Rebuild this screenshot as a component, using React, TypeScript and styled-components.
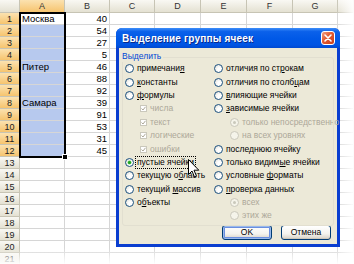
import React from 'react';
import styled, { createGlobalStyle, css } from 'styled-components';

const GlobalStyle = createGlobalStyle`
  html, body {
    margin: 0;
    padding: 0;
    background: #fff;
  }
  body {
    font-family: 'Liberation Sans', Arial, sans-serif;
  }
`;

const Screen = styled.div`
  position: relative;
  width: 354px;
  height: 264px;
  overflow: hidden;
  background: #fff;
`;

/* ---------- spreadsheet ---------- */

const Sheet = styled.div`
  display: grid;
  grid-template-columns: 20px 45px 45px 45px 46px 46px 46px 45px 1fr;
  grid-template-rows: 13px;
  grid-auto-rows: 12px;
  font-size: 9.5px;
  color: #000;
`;

const headerBg = css<{ $active?: boolean }>`
  background: ${({ $active }) =>
    $active
      ? 'linear-gradient(#fbe2b0, #f6c46e)'
      : 'linear-gradient(#f9f8f3, #e4e1d2)'};
  color: #333;
  border-right: 1px solid #c7c4b4;
  border-bottom: 1px solid #c7c4b4;
`;

const Corner = styled.div`
  ${headerBg}
`;

const ColHeader = styled.div<{ $active?: boolean }>`
  ${headerBg}
  display: flex;
  align-items: center;
  justify-content: center;
  font-size: 9px;
`;

const RowHeader = styled.div<{ $active?: boolean }>`
  ${headerBg}
  display: flex;
  align-items: center;
  justify-content: center;
  font-size: 9px;
  color: #222;
`;

const Cell = styled.div<{ $selected?: boolean; $align?: 'left' | 'right' }>`
  display: flex;
  align-items: center;
  justify-content: ${({ $align }) => ($align === 'right' ? 'flex-end' : 'flex-start')};
  padding: 0 2px;
  border-right: 1px solid #d6d6d6;
  border-bottom: 1px solid #d6d6d6;
  background: ${({ $selected }) => ($selected ? '#b7c9ee' : '#fff')};
  white-space: nowrap;
  overflow: hidden;
`;

const SelectionFrame = styled.div`
  position: absolute;
  left: 19px;
  top: 12px;
  width: 43px;
  height: 142px;
  border: 2px solid #000;
`;

const FillHandle = styled.div`
  position: absolute;
  left: 62px;
  top: 154px;
  width: 4px;
  height: 4px;
  background: #000;
  border: 1px solid #fff;
`;

const FadeRight = styled.div`
  position: absolute;
  top: 0;
  right: 0;
  width: 18px;
  height: 100%;
  background: linear-gradient(to right, rgba(255, 255, 255, 0), rgba(255, 255, 255, 0.95));
  pointer-events: none;
`;

const FadeBottom = styled.div`
  position: absolute;
  left: 0;
  bottom: 0;
  width: 100%;
  height: 16px;
  background: linear-gradient(rgba(255, 255, 255, 0), rgba(255, 255, 255, 0.95));
  pointer-events: none;
`;

/* ---------- dialog ---------- */

const Window = styled.div`
  position: absolute;
  left: 116px;
  top: 28px;
  width: 224px;
  height: 219px;
  display: flex;
  flex-direction: column;
  border-radius: 6px 6px 0 0;
  background: #0a3ed0;
  box-sizing: border-box;
  padding: 0 3px 3px;
  font-family: 'Liberation Sans', Arial, sans-serif;
  font-size: 8.5px;
`;

const TitleBar = styled.div`
  height: 20px;
  margin: 0 -3px;
  padding: 0 5px 0 6px;
  display: flex;
  align-items: center;
  justify-content: space-between;
  border-radius: 6px 6px 0 0;
  background: linear-gradient(#3d8ef9 0%, #0b61ea 18%, #0058e6 55%, #0054e3 85%, #0049d0 100%);
`;

const Title = styled.span`
  color: #fff;
  font-weight: bold;
  font-size: 10px;
  letter-spacing: 0.2px;
  text-shadow: 1px 1px 0 #0a2a8a;
`;

const CloseBox = styled.div`
  width: 14px;
  height: 14px;
  box-sizing: border-box;
  border: 1px solid #fff;
  border-radius: 3px;
  background: linear-gradient(135deg, #f0a184 0%, #e2582f 45%, #c8401c 100%);
  display: flex;
  align-items: center;
  justify-content: center;
`;

const Body = styled.div`
  flex: 1;
  background: #ece9d8;
  display: flex;
  flex-direction: column;
  padding: 3px 0 0 3px;
`;

const GroupBox = styled.div`
  position: relative;
  margin-right: 3px;
  padding-top: 11px;
`;

const GroupLine = styled.div`
  position: absolute;
  left: 0;
  right: 0;
  top: 6px;
  bottom: -3px;
  border: 1px solid #e2dfd0;
  border-radius: 3px;
  pointer-events: none;
`;

const Legend = styled.span`
  position: absolute;
  left: 0;
  top: 0;
  padding-right: 2px;
  color: #0046d5;
  background: #ece9d8;
  line-height: 11px;
`;

const Columns = styled.div`
  display: grid;
  grid-template-columns: 89px 1fr;
`;

const Column = styled.div`
  display: flex;
  flex-direction: column;
`;

const Option = styled.div<{ $indent?: number; $disabled?: boolean }>`
  height: 13.4px;
  display: flex;
  align-items: center;
  gap: 2px;
  padding-left: ${({ $indent = 0 }) => 3 + $indent}px;
  color: ${({ $disabled }) => ($disabled ? '#aca899' : '#000')};
  white-space: nowrap;
`;

const RadioDot = styled.span<{ $checked?: boolean; $disabled?: boolean }>`
  position: relative;
  flex: none;
  width: 9px;
  height: 9px;
  box-sizing: border-box;
  border-radius: 50%;
  border: 1px solid ${({ $disabled }) => ($disabled ? '#cac8bb' : '#1c5180')};
  background: ${({ $disabled }) =>
    $disabled ? '#f5f4ea' : 'radial-gradient(circle at 65% 65%, #ffffff 30%, #dcdcd5 100%)'};

  ${({ $checked, $disabled }) =>
    $checked &&
    css`
      &::after {
        content: '';
        position: absolute;
        left: 2px;
        top: 2px;
        width: 3px;
        height: 3px;
        border-radius: 50%;
        background: ${$disabled ? '#cac8bb' : '#21a121'};
        box-shadow: ${$disabled ? 'none' : '0 0 0 0.5px #5fd35f'};
      }
    `}
`;

const CheckBox = styled.span`
  flex: none;
  width: 7px;
  height: 7px;
  box-sizing: border-box;
  border: 1px solid #cac8bb;
  background: #fff;
  display: flex;
  align-items: center;
  justify-content: center;
`;

const Label = styled.span<{ $focused?: boolean }>`
  line-height: 11px;
  padding: 0 1px;
  outline: ${({ $focused }) => ($focused ? '1px dotted #000' : 'none')};
  outline-offset: 0;

  u {
    text-decoration: underline;
  }
`;

const ButtonRow = styled.div`
  display: flex;
  justify-content: flex-end;
  gap: 9px;
  padding: 2px 6px 0 0;
`;

const Button = styled.button<{ $default?: boolean }>`
  width: 50px;
  height: 15px;
  padding: 0;
  font-family: inherit;
  font-size: 8.5px;
  color: #000;
  border: 1px solid #003c74;
  border-radius: 3px;
  background: linear-gradient(#ffffff 0%, #f4f3ee 60%, #d6d0c5 100%);
  box-shadow: ${({ $default }) =>
    $default ? 'inset 0 0 0 1px #98b8ea, inset 0 0 0 2px #6b8fe0' : 'inset 0 -1px 0 #cdc7ba'};
`;

const Cursor = styled.svg`
  position: absolute;
  left: 188px;
  top: 159px;
`;

type Opt = {
  label: React.ReactNode;
  kind?: 'radio' | 'check';
  checked?: boolean;
  disabled?: boolean;
  indent?: number;
  focused?: boolean;
};

const leftOptions: Opt[] = [
  { label: <>примечани<u>я</u></> },
  { label: <><u>к</u>онстанты</> },
  { label: <><u>ф</u>ормулы</> },
  { label: 'числа', kind: 'check', checked: true, disabled: true, indent: 15 },
  { label: 'текст', kind: 'check', checked: true, disabled: true, indent: 15 },
  { label: 'логические', kind: 'check', checked: true, disabled: true, indent: 15 },
  { label: 'ошибки', kind: 'check', checked: true, disabled: true, indent: 15 },
  { label: 'пустые ячейки', checked: true, focused: true },
  { label: <>текущую о<u>б</u>ласть</> },
  { label: <>текущий <u>м</u>ассив</> },
  { label: <>о<u>б</u>ъекты</> },
];

const rightOptions: Opt[] = [
  { label: <>отличия по ст<u>р</u>окам</> },
  { label: <>отличия по столб<u>ц</u>ам</> },
  { label: <><u>в</u>лияющие ячейки</> },
  { label: <><u>з</u>ависимые ячейки</> },
  { label: 'только непосредственно', checked: true, disabled: true, indent: 16 },
  { label: 'на всех уровнях', disabled: true, indent: 16 },
  { label: <>после<u>д</u>нюю ячейку</> },
  { label: <>только видим<u>ы</u>е ячейки</> },
  { label: <>условные <u>ф</u>орматы</> },
  { label: <><u>п</u>роверка данных</> },
  { label: 'всех', checked: true, disabled: true, indent: 16 },
  { label: 'этих же', disabled: true, indent: 16 },
];

const OptionRow = ({ opt }: { opt: Opt }) => (
  <Option $indent={opt.indent} $disabled={opt.disabled}>
    {opt.kind === 'check' ? (
      <CheckBox>
        {opt.checked && (
          <svg width="5" height="5" viewBox="0 0 5 5">
            <path d="M0.5 2.5 L2 4 L4.5 0.8" fill="none" stroke="#aca899" strokeWidth="1" />
          </svg>
        )}
      </CheckBox>
    ) : (
      <RadioDot $checked={opt.checked} $disabled={opt.disabled} />
    )}
    <Label $focused={opt.focused}>{opt.label}</Label>
  </Option>
);

const columns = ['A', 'B', 'C', 'D', 'E', 'F', 'G', ''];
const bValues = [40, 54, 27, 5, 46, 88, 92, 39, 91, 53, 31, 45];
const aValues: Record<number, string> = { 1: 'Москва', 5: 'Питер', 8: 'Самара' };
const ROWS = 21;

export default function App() {
  return (
    <Screen>
      <GlobalStyle />
      <Sheet>
        <Corner />
        {columns.map((c, i) => (
          <ColHeader key={i} $active={c === 'A'}>
            {c}
          </ColHeader>
        ))}
        {Array.from({ length: ROWS }, (_, r) => {
          const row = r + 1;
          const inSel = row <= 12;
          return (
            <React.Fragment key={row}>
              <RowHeader $active={inSel}>{row}</RowHeader>
              <Cell $selected={inSel && row > 1}>{aValues[row] ?? ''}</Cell>
              <Cell $align="right">{inSel ? bValues[r] : ''}</Cell>
              <Cell />
              <Cell />
              <Cell />
              <Cell />
              <Cell />
              <Cell />
            </React.Fragment>
          );
        })}
      </Sheet>
      <SelectionFrame />
      <FillHandle />
      <FadeRight />
      <FadeBottom />

      <Window>
        <TitleBar>
          <Title>Выделение группы ячеек</Title>
          <CloseBox>
            <svg width="8" height="8" viewBox="0 0 8 8">
              <path d="M1 1 L7 7 M7 1 L1 7" stroke="#fff" strokeWidth="1.6" strokeLinecap="round" />
            </svg>
          </CloseBox>
        </TitleBar>
        <Body>
          <GroupBox>
            <GroupLine />
            <Legend>Выделить</Legend>
            <Columns>
              <Column>
                {leftOptions.map((o, i) => (
                  <OptionRow key={i} opt={o} />
                ))}
              </Column>
              <Column>
                {rightOptions.map((o, i) => (
                  <OptionRow key={i} opt={o} />
                ))}
              </Column>
            </Columns>
          </GroupBox>
          <ButtonRow>
            <Button $default>OK</Button>
            <Button>Отмена</Button>
          </ButtonRow>
        </Body>
      </Window>

      <Cursor width="12" height="20" viewBox="0 0 12 20">
        <path
          d="M0.5 0.5 L0.5 15.5 L4 12 L6.5 18 L8.5 17.2 L6 11.2 L10.8 11.2 Z"
          fill="#fff"
          stroke="#000"
          strokeWidth="1"
          strokeLinejoin="round"
        />
      </Cursor>
    </Screen>
  );
}
